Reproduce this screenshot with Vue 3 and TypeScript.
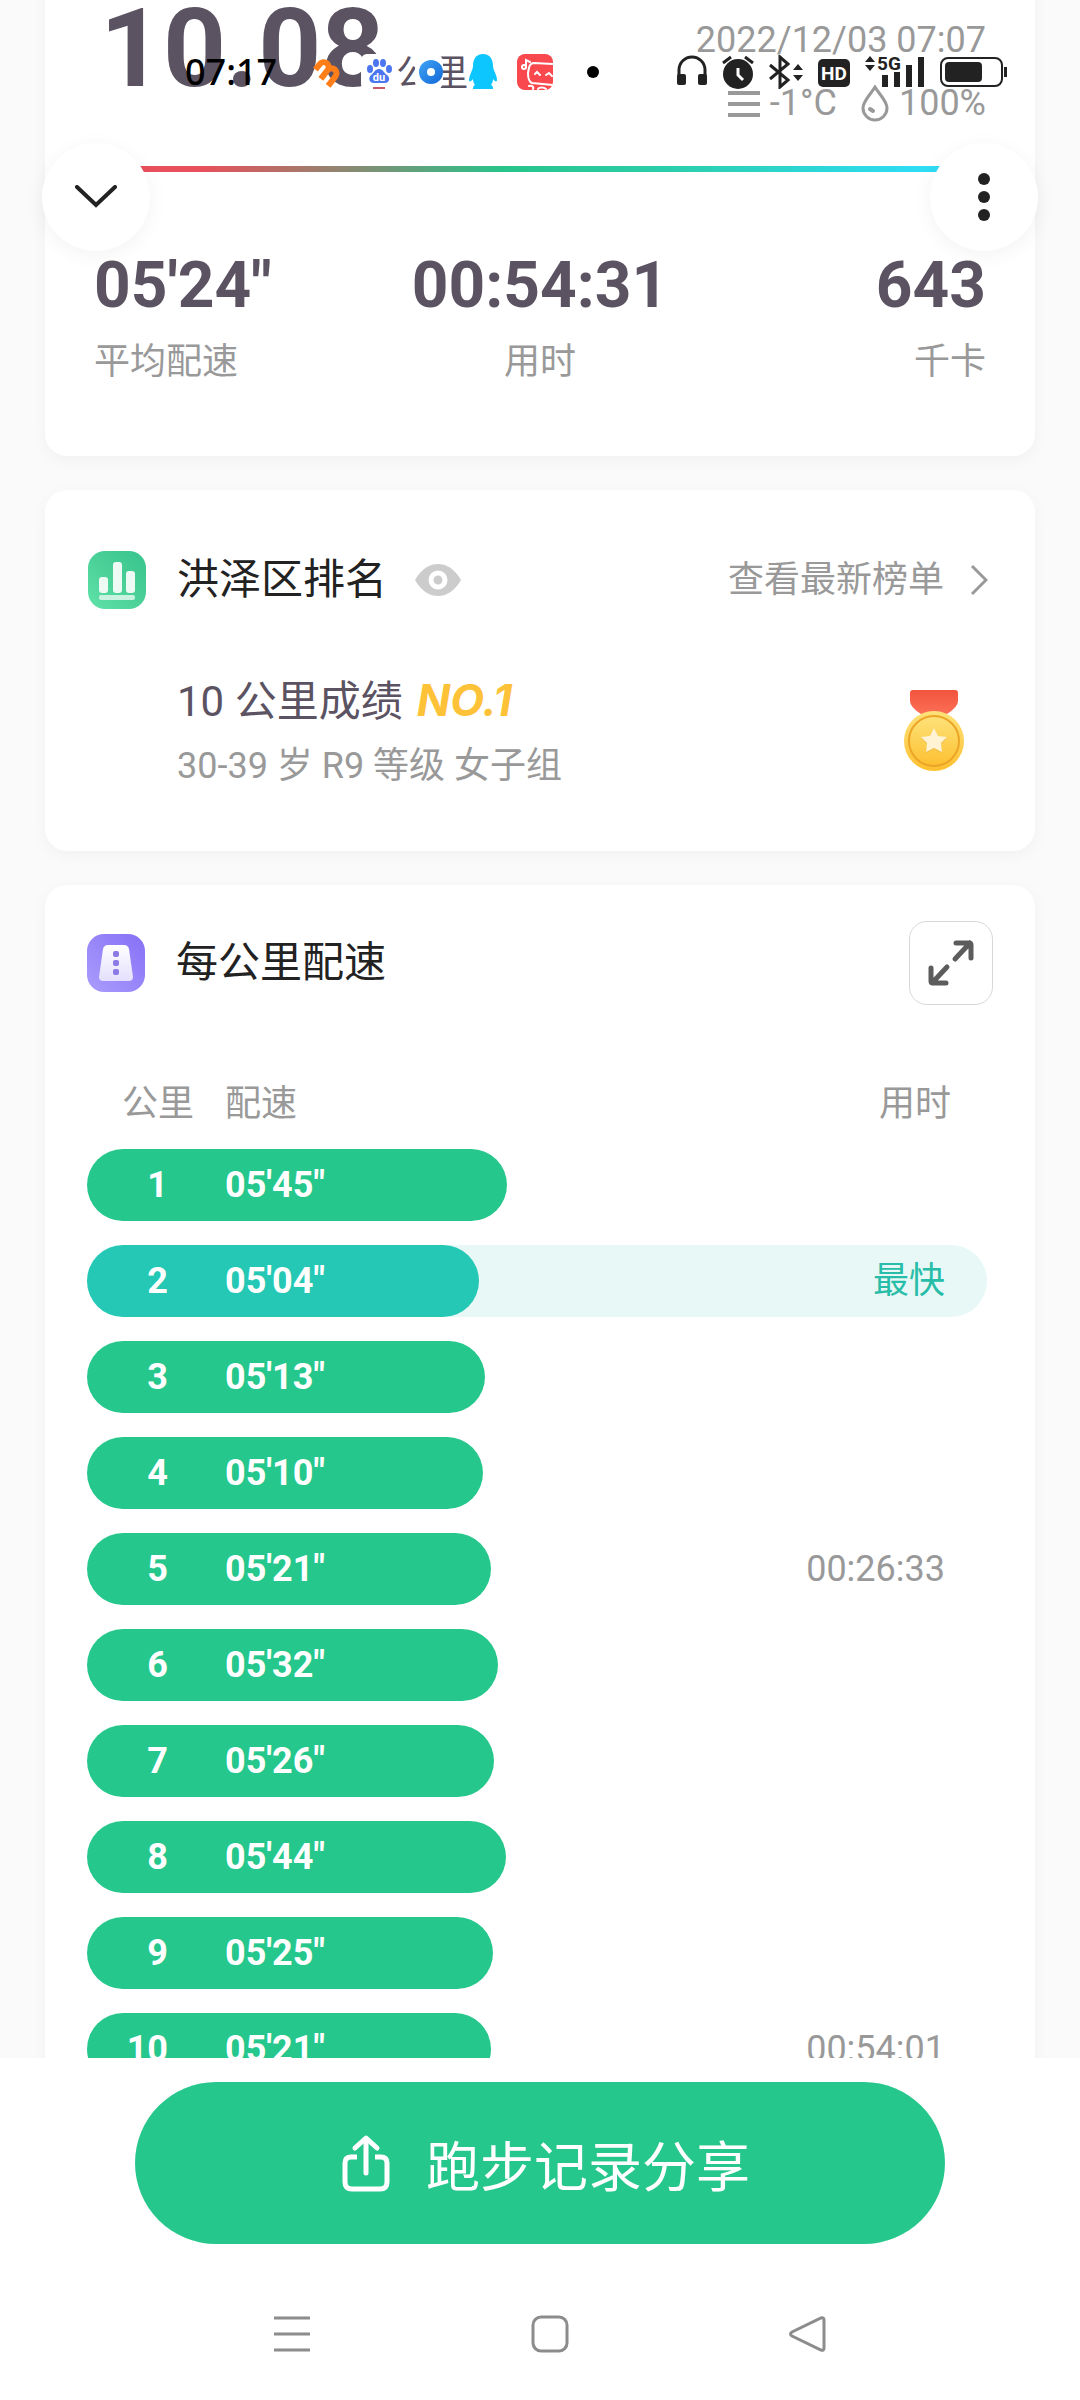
<script setup lang="ts">
interface Split {
  km: number
  pace: string
  seconds: number
  note?: string
  fastest?: boolean
}

const splits: Split[] = [
  { km: 1, pace: '05\'45"', seconds: 345 },
  { km: 2, pace: '05\'04"', seconds: 304, note: '最快', fastest: true },
  { km: 3, pace: '05\'13"', seconds: 313 },
  { km: 4, pace: '05\'10"', seconds: 310 },
  { km: 5, pace: '05\'21"', seconds: 321, note: '00:26:33' },
  { km: 6, pace: '05\'32"', seconds: 332 },
  { km: 7, pace: '05\'26"', seconds: 326 },
  { km: 8, pace: '05\'44"', seconds: 344 },
  { km: 9, pace: '05\'25"', seconds: 325 },
  { km: 10, pace: '05\'21"', seconds: 321, note: '00:54:01' },
]

const stats = [
  { value: '05\'24"', label: '平均配速' },
  { value: '00:54:31', label: '用时' },
  { value: '643', label: '千卡' },
]

const fastest = Math.min(...splits.map((s) => s.seconds))

function barWidth(s: Split): string {
  return `${(43.56 + (s.seconds - fastest) * 0.076).toFixed(2)}%`
}
</script>

<template>
  <div class="app">
    <div class="status">
      <div class="status-left">
        <span class="clock">07:17</span>
        <svg width="36" height="36" viewBox="0 0 36 36" aria-hidden="true">
          <path
            d="M-10 6V-1a5 5 0 0 1 10 0V10M0 -1a5 5 0 0 1 10 0V11"
            transform="translate(18 17) rotate(38)"
            fill="none"
            stroke="#ff7e17"
            stroke-width="6"
          />
        </svg>
        <svg width="36" height="36" viewBox="0 0 36 36" aria-hidden="true">
          <rect width="36" height="36" rx="6" fill="#fff" />
          <g fill="#4a76f0">
            <ellipse cx="9" cy="15" rx="3" ry="4" />
            <ellipse cx="15" cy="9" rx="3" ry="4" />
            <ellipse cx="22" cy="9" rx="3" ry="4" />
            <ellipse cx="28" cy="15" rx="3" ry="4" />
            <path d="M18 15c4 0 5 4 8 6c4 3 2 8-2 8H13c-5 0-6-5-3-8c3-2 4-6 8-6z" />
          </g>
          <text x="18" y="27" text-anchor="middle" class="du">du</text>
          <rect x="12" y="33" width="12" height="2" fill="#c65a68" />
        </svg>
        <svg width="36" height="36" viewBox="0 0 36 36" aria-hidden="true">
          <defs>
            <linearGradient id="ring" x1="0" y1="0" x2="1" y2="1">
              <stop offset="0" stop-color="#3fa4f5" />
              <stop offset="1" stop-color="#1268d8" />
            </linearGradient>
          </defs>
          <rect x="2" width="28" height="36" rx="8" fill="#fff" />
          <circle cx="18" cy="18" r="12" fill="url(#ring)" />
          <circle cx="18" cy="18" r="4" fill="#fff" />
        </svg>
        <svg width="36" height="36" viewBox="0 0 36 36" aria-hidden="true">
          <path fill="#0cc6fd" d="M18 0c7 0 10 5 10 12c0 4 4 9 4 14c0 2-2 2-4-1c0 3-1 4-2 6c2 1 2 2 2 4H8c0-2 0-3 2-4c-1-2-2-3-2-6c-2 3-4 3-4 1c0-5 4-10 4-14C8 5 11 0 18 0z" />
        </svg>
        <svg width="36" height="36" viewBox="0 0 36 36" aria-hidden="true">
          <rect width="36" height="36" rx="8" fill="#f9484e" />
          <g fill="none" stroke="#fff" stroke-width="2" stroke-linecap="round">
            <path d="M9 13V6l4 2" />
            <circle cx="7" cy="13" r="2" />
            <path d="M36 10L17 9c-4 0-5 3-6 10c0 6 1 9 4 10l21 2" />
            <path d="M18 20l2-2l3 3M29 21l3-2l3 3" />
            <path d="M12 32c3-1 5 1 4 3M21 35c1-2 6-2 8 0" />
          </g>
        </svg>
        <span class="more-dot"></span>
      </div>
      <div class="status-right">
        <svg width="30" height="34" viewBox="0 0 30 34" aria-hidden="true">
          <path d="M2 24V15a13 13 0 0 1 26 0v9" fill="none" stroke="#222" stroke-width="3" />
          <rect y="19" width="9" height="11" rx="2" fill="#222" />
          <rect x="21" y="19" width="9" height="11" rx="2" fill="#222" />
        </svg>
        <svg width="32" height="34" viewBox="0 0 32 34" aria-hidden="true">
          <circle cx="16" cy="19" r="15" fill="#222" />
          <path d="M1 8L9 2M31 8L23 2" stroke="#222" stroke-width="3" />
          <path d="M16 13v7l5 5" fill="none" stroke="#fff" stroke-width="3" />
        </svg>
        <svg width="34" height="34" viewBox="0 0 34 34" aria-hidden="true">
          <path d="M1 10L19 25l-8 7V2l8 7L1 24" fill="none" stroke="#222" stroke-width="3" />
          <path d="M24 15l5-6l5 6zM24 20l5 6l5-6z" fill="#222" />
        </svg>
        <svg width="32" height="34" viewBox="0 0 32 34" aria-hidden="true">
          <rect y="4" width="32" height="28" rx="5" fill="#222" />
          <text x="16" y="25" text-anchor="middle" class="hd">HD</text>
        </svg>
        <svg width="60" height="34" viewBox="0 0 60 34" aria-hidden="true">
          <path d="M0 7l5-6l5 6zM0 10l5 6l5-6z" fill="#222" />
          <text x="12" y="15" class="fiveg">5G</text>
          <path d="M17 20h6v12h-6zM29 17h6v15h-6zM41 10h6v22h-6zM53 2h6v30h-6z" fill="#222" />
        </svg>
        <svg width="68" height="34" viewBox="0 0 68 34" aria-hidden="true">
          <rect x="1" y="3" width="61" height="28" rx="7" fill="none" stroke="#222" stroke-width="2" />
          <rect x="5" y="7" width="37" height="20" rx="4" fill="#222" />
          <rect x="64" y="12" width="3" height="10" fill="#222" />
        </svg>
      </div>
    </div>

    <div class="float-bar">
      <button type="button" class="round" aria-label="收起">
        <svg width="44" height="24" viewBox="0 0 44 24" aria-hidden="true">
          <path d="M3 2L22 20L41 2" fill="none" stroke="#222" stroke-width="4" stroke-linecap="round" />
        </svg>
      </button>
      <button type="button" class="round" aria-label="更多">
        <svg width="12" height="48" viewBox="0 0 12 48" aria-hidden="true">
          <g fill="#222">
            <circle cx="6" cy="6" r="6" />
            <circle cx="6" cy="24" r="6" />
            <circle cx="6" cy="42" r="6" />
          </g>
        </svg>
      </button>
    </div>

    <main class="feed">
      <section class="card summary">
        <div class="summary-top">
          <div class="distance">10.08<span class="unit">公里</span></div>
          <div class="meta">
            <div>2022/12/03 07:07</div>
            <div class="weather">
              <svg width="32" height="28" viewBox="0 0 32 28" aria-hidden="true">
                <path d="M0 3h32M0 14h32M0 25h32" stroke="#999" stroke-width="4" />
              </svg>
              <span class="temp">-1°C</span>
              <svg width="28" height="38" viewBox="0 0 28 38" aria-hidden="true">
                <path d="M14 2C10 9 2 16 2 23a12 12 0 0 0 24 0C26 16 18 9 14 2z" fill="none" stroke="#999" stroke-width="3" />
                <path d="M9 24l3 2" stroke="#999" stroke-width="4" stroke-linecap="round" />
              </svg>
              <span>100%</span>
            </div>
          </div>
        </div>
        <div class="pace-line"></div>
        <div class="stats">
          <div v-for="s in stats" :key="s.label" class="stat">
            <div class="stat-value">{{ s.value }}</div>
            <div class="stat-label">{{ s.label }}</div>
          </div>
        </div>
      </section>

      <section class="card ranking">
        <header class="card-head">
          <svg width="58" height="58" viewBox="0 0 58 58" aria-hidden="true">
            <defs>
              <linearGradient id="green" x1="1" y1="0" x2="0" y2="1">
                <stop offset="0" stop-color="#36c48c" />
                <stop offset="0.500" stop-color="#4bd098" />
                <stop offset="1" stop-color="#5fe3a9" />
              </linearGradient>
            </defs>
            <rect width="58" height="58" rx="17" fill="url(#green)" />
            <g fill="#eefbf5">
              <rect x="11" y="26" width="9" height="16" rx="3" />
              <rect x="25" y="11" width="9" height="31" rx="3" />
              <rect x="38" y="20" width="9" height="22" rx="3" />
              <rect x="11" y="44" width="36" height="5" rx="2" fill="#c9f3e0" />
            </g>
          </svg>
          <h2>洪泽区排名</h2>
          <svg class="eye" width="46" height="34" viewBox="0 0 46 34" aria-hidden="true">
            <path d="M0 17C7 5 15 1 23 1s16 4 23 16C39 29 31 33 23 33S7 29 0 17z" fill="#ccc" />
            <circle cx="23" cy="17" r="7" fill="#ccc" stroke="#fff" stroke-width="5" />
          </svg>
          <a href="#" class="board-link">查看最新榜单
            <svg width="18" height="32" viewBox="0 0 18 32" aria-hidden="true">
              <path d="M2 2l14 14L2 30" fill="none" stroke="#999" stroke-width="3" />
            </svg>
          </a>
        </header>
        <div class="rank-body">
          <div>
            <div class="rank-title">10 公里成绩<em>NO.1</em></div>
            <div class="rank-sub">30-39 岁 R9 等级 女子组</div>
          </div>
          <svg width="62" height="88" viewBox="0 0 62 88" aria-hidden="true">
            <defs>
              <linearGradient id="gold" x1="0" y1="0" x2="0" y2="1">
                <stop offset="0" stop-color="#fde27a" />
                <stop offset="1" stop-color="#fdc02f" />
              </linearGradient>
              <linearGradient id="ribbon" x1="0" y1="0" x2="0" y2="1">
                <stop offset="0" stop-color="#f2543f" />
                <stop offset="1" stop-color="#fb6f55" />
              </linearGradient>
            </defs>
            <path d="M10 0h42q3 0 3 3v8q0 6-11 13H18Q7 17 7 11V3q0-3 3-3z" fill="url(#ribbon)" />
            <circle cx="31" cy="51" r="30" fill="url(#gold)" />
            <circle cx="31" cy="51" r="25" fill="url(#gold)" stroke="#eda528" stroke-width="2" />
            <path d="M31 39l4 8l9 1l-6 6l1 9l-8-4l-8 4l1-9l-6-6l9-1z" fill="#e8a83a" opacity="0.500" />
            <path d="M31 38l4 8l9 1l-6 6l1 9l-8-4l-8 4l1-9l-6-6l9-1z" fill="#fff3d4" />
          </svg>
        </div>
      </section>

      <section class="card splits">
        <header class="card-head">
          <svg width="58" height="58" viewBox="0 0 58 58" aria-hidden="true">
            <defs>
              <linearGradient id="violet" x1="1" y1="0" x2="0" y2="1">
                <stop offset="0" stop-color="#8670f6" />
                <stop offset="1" stop-color="#aa9dfc" />
              </linearGradient>
              <linearGradient id="road" x1="0" y1="0" x2="0" y2="1">
                <stop offset="0" stop-color="#fff" />
                <stop offset="1" stop-color="#e4dffd" />
              </linearGradient>
            </defs>
            <rect width="58" height="58" rx="17" fill="url(#violet)" />
            <path d="M21 11h16q4 0 5 4l4 28q0 4-4 4H16q-4 0-4-4l4-28q1-4 5-4z" fill="url(#road)" />
            <g fill="#8c7ae6">
              <rect x="26" y="17" width="6" height="6" rx="2" />
              <rect x="26" y="26" width="6" height="6" rx="2" />
              <rect x="26" y="35" width="6" height="6" rx="2" />
            </g>
          </svg>
          <h2>每公里配速</h2>
          <button type="button" class="expand" aria-label="展开">
            <svg width="48" height="48" viewBox="0 0 48 48" aria-hidden="true">
              <g fill="none" stroke="#5c5c5c" stroke-width="5" stroke-linecap="round" stroke-linejoin="round">
                <path d="M28 20L43 4M29 4h13q2 0 2 2v13" />
                <path d="M20 28L5 44M19 44H6q-2 0-2-2V29" />
              </g>
            </svg>
          </button>
        </header>
        <table>
          <thead>
            <tr>
              <th scope="col">公里</th>
              <th scope="col">配速</th>
              <th scope="col">用时</th>
            </tr>
          </thead>
          <tbody>
            <tr v-for="s in splits" :key="s.km" :class="{ fastest: s.fastest }">
              <td><span class="bar" :style="{ width: barWidth(s) }"></span>{{ s.km }}</td>
              <td>{{ s.pace }}</td>
              <td>{{ s.note }}</td>
            </tr>
          </tbody>
        </table>
      </section>
    </main>

    <footer class="bottom">
      <button type="button" class="share">
        <svg width="48" height="58" viewBox="0 0 48 58" aria-hidden="true">
          <g fill="none" stroke="#fff" stroke-width="5" stroke-linejoin="round">
            <path d="M15 23H9q-6 0-6 6v19q0 7 7 7h28q7 0 7-7V29q0-6-6-6h-6" />
            <path d="M24 39V6" stroke-linecap="round" />
            <path d="M13 14L24 4L35 14" stroke-linecap="round" />
          </g>
        </svg>
        跑步记录分享
      </button>
      <nav class="sysnav">
        <button type="button" aria-label="最近任务">
          <svg width="38" height="38" viewBox="0 0 38 38" aria-hidden="true">
            <path d="M1 3h36M1 19h36M1 35h36" stroke="#8c8c8c" stroke-width="3" />
          </svg>
        </button>
        <button type="button" aria-label="主页">
          <svg width="38" height="38" viewBox="0 0 38 38" aria-hidden="true">
            <rect x="2" y="2" width="34" height="34" rx="8" fill="none" stroke="#8c8c8c" stroke-width="3" />
          </svg>
        </button>
        <button type="button" aria-label="返回">
          <svg width="38" height="38" viewBox="0 0 38 38" aria-hidden="true">
            <path d="M33 3q3-1 3 2v28q0 3-3 2L4 21q-3-2 0-4z" fill="none" stroke="#8c8c8c" stroke-width="3" />
          </svg>
        </button>
      </nav>
    </footer>
  </div>
</template>

<style>
body {
  margin: 0;
  background: #fafafa;
}
</style>

<style scoped>
.app {
  position: relative;
  display: flex;
  flex-direction: column;
  height: 100vh;
  overflow: hidden;
  background: #fafafa;
  color: #222;
  font-family: Roboto, "Noto Sans CJK SC", sans-serif;
  font-size: 36px;
  font-weight: 400;
}

svg {
  display: block;
  flex: none;
}

button {
  padding: 0;
  border: 0;
  background: none;
  font: inherit;
  color: inherit;
}

.status {
  position: absolute;
  z-index: 3;
  top: 54px;
  left: 0;
  right: 0;
  display: flex;
  justify-content: space-between;
  padding: 0 72px 0 185px;
}

.status-left,
.status-right {
  display: flex;
  align-items: center;
  height: 36px;
}

.status-left {
  gap: 16px;
}

.status-right {
  gap: 15px;
}

.clock {
  margin-right: 16px;
  font-family: "Noto Sans", sans-serif;
  font-weight: 500;
  line-height: 36px;
  color: #000;
}

.more-dot {
  width: 12px;
  height: 12px;
  margin-left: 18px;
  border-radius: 50%;
  background: #000;
}

.du {
  font: 700 11px Roboto, sans-serif;
  fill: #fff;
}

.hd {
  font: 700 19px Roboto, sans-serif;
  fill: #fff;
}

.fiveg {
  font: 700 19px Roboto, sans-serif;
  fill: #222;
}

.float-bar {
  position: absolute;
  z-index: 2;
  top: 143px;
  left: 0;
  right: 0;
  display: flex;
  justify-content: space-between;
  padding: 0 42px;
}

.round {
  display: flex;
  align-items: center;
  justify-content: center;
  width: 108px;
  height: 108px;
  border-radius: 50%;
  background: #fff;
  box-shadow: 0 4px 20px rgba(0, 0, 0, 0.05);
}

.feed {
  flex: 1;
  min-height: 0;
  display: flex;
  flex-direction: column;
  gap: 34px;
  margin-top: -40px;
  padding: 0 45px;
  overflow: hidden;
}

.card {
  flex: none;
  border-radius: 22px;
  background: #fff;
  box-shadow: 0 4px 16px rgba(0, 0, 0, 0.04);
}

.summary {
  padding: 9px 49px 70px;
}

.summary-top {
  display: flex;
  justify-content: space-between;
}

.distance {
  padding: 12px 0 0 6px;
  font-size: 110px;
  font-weight: 700;
  line-height: 136px;
  color: #5b5262;
}

.unit {
  margin-left: 12px;
  font-size: 36px;
  font-weight: 400;
  line-height: 0;
}

.meta {
  padding-top: 40px;
  line-height: 63px;
  text-align: right;
  color: #999;
}

.weather {
  display: flex;
  align-items: center;
  justify-content: flex-end;
  gap: 10px;
}

.temp {
  margin-right: 14px;
}

.pace-line {
  height: 6px;
  margin-top: 31px;
  background: linear-gradient(90deg, #e8505b 12%, #27c48a 46%, #2bcfae 66%, #2edcf4 92%);
}

.stats {
  display: grid;
  grid-template-columns: 1fr auto 1fr;
  margin-top: 76px;
}

.stat {
  text-align: center;
}

.stat:first-child {
  text-align: left;
}

.stat:last-child {
  text-align: right;
}

.stat-value {
  font-size: 64px;
  font-weight: 700;
  line-height: 76px;
  color: #5b5262;
}

.stat-label {
  margin-top: 14px;
  line-height: 48px;
  color: #999;
}

.ranking {
  padding: 60px 47px 53px 43px;
}

.card-head {
  display: flex;
  align-items: center;
}

h2 {
  margin: 0 0 0 31px;
  font-size: 42px;
  font-weight: 400;
  line-height: 60px;
}

.eye {
  margin-left: 28px;
}

.board-link {
  display: flex;
  align-items: center;
  gap: 26px;
  margin-left: auto;
  line-height: 48px;
  color: #999;
  text-decoration: none;
}

.rank-body {
  display: flex;
  align-items: center;
  justify-content: space-between;
  margin-top: 60px;
  padding: 0 23px 0 89px;
  line-height: 64px;
}

.rank-title {
  font-size: 42px;
  color: #5b5262;
}

.rank-title em {
  margin-left: 14px;
  font-family: Inter, Lato, sans-serif;
  font-size: 44px;
  font-weight: 700;
  font-style: italic;
  line-height: 0;
  color: #fdc237;
}

.rank-sub {
  color: #999;
}

.splits {
  padding: 36px 42px 60px;
}

.expand {
  display: flex;
  align-items: center;
  justify-content: center;
  width: 84px;
  height: 84px;
  margin-left: auto;
  border: 1px solid #d8d8d8;
  border-radius: 18px;
}

table {
  display: flex;
  flex-direction: column;
  gap: 21px;
  margin: 75px 6px 0 0;
}

thead,
tbody {
  display: flex;
  flex-direction: column;
  gap: 24px;
}

tr {
  position: relative;
  z-index: 0;
  display: grid;
  grid-template-columns: 138px 1fr 1fr;
  border-radius: 36px;
  line-height: 72px;
}

thead tr {
  line-height: 48px;
}

th {
  padding: 0;
  font-weight: 400;
  color: #999;
  text-align: left;
}

th:first-child {
  padding-right: 31px;
  text-align: right;
}

th:last-child {
  padding-right: 36px;
  text-align: right;
}

td {
  padding: 0;
  font-weight: 700;
  color: #fff;
}

td:first-child {
  padding-right: 57px;
  text-align: right;
}

td:last-child {
  padding-right: 42px;
  font-weight: 400;
  color: #999;
  text-align: right;
}

.bar {
  position: absolute;
  z-index: -1;
  top: 0;
  bottom: 0;
  left: 0;
  border-radius: 36px;
  background: #26c78c;
}

.fastest {
  background: #e8f8f6;
}

.fastest .bar {
  background: #24c8b4;
}

.fastest td:last-child {
  color: #28bda8;
}

.bottom {
  position: relative;
  z-index: 1;
  padding: 24px 135px 47px;
  background: #fff;
}

.share {
  display: flex;
  align-items: center;
  justify-content: center;
  gap: 36px;
  width: 100%;
  height: 162px;
  padding-left: 12px;
  border-radius: 81px;
  background: #26c78c;
  color: #fff;
  font-size: 54px;
}

.sysnav {
  display: flex;
  justify-content: space-between;
  margin-top: 71px;
  padding: 0 119px 0 138px;
}
</style>
